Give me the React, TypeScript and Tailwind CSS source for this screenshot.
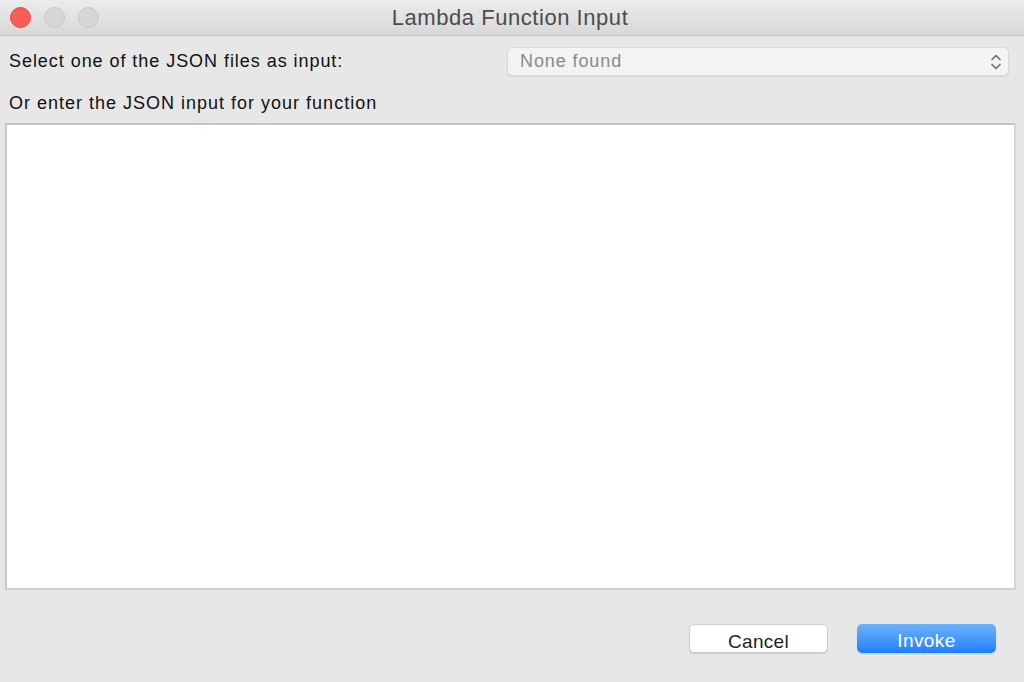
import React from 'react';

// macOS-style dialog: "Lambda Function Input"

const TrafficLights = () => (
  <div className="flex items-center gap-[13px] pl-[10px]">
    <span className="block w-[21px] h-[21px] rounded-full bg-[#fc5b57] border border-[#e2463f]" />
    <span className="block w-[21px] h-[21px] rounded-full bg-[#d6d6d6] border border-[#c6c6c6]" />
    <span className="block w-[21px] h-[21px] rounded-full bg-[#d6d6d6] border border-[#c6c6c6]" />
  </div>
);

const Chevrons = () => (
  <svg width="12" height="18" viewBox="0 0 12 18" fill="none" stroke="#6d6d6d" strokeWidth="1.6" strokeLinecap="round" strokeLinejoin="round">
    <path d="M2 6.5 L6 2.5 L10 6.5" />
    <path d="M2 11.5 L6 15.5 L10 11.5" />
  </svg>
);

export default function App() {
  return (
    <div
      className="w-[1024px] h-[682px] flex flex-col bg-[#e7e7e7] text-[#111] overflow-hidden"
      style={{ fontFamily: '"Liberation Sans", Arial, sans-serif' }}
    >
      {/* title bar */}
      <div className="relative h-[36px] shrink-0 flex items-center bg-gradient-to-b from-[#ececec] to-[#d8d8d8] border-b border-[#c2c2c2]">
        <TrafficLights />
        <div className="absolute inset-0 flex items-center justify-center text-[22px] tracking-[0.55px] text-[#4c4c4c] pr-[4px]">
          Lambda Function Input
        </div>
      </div>

      {/* body */}
      <div className="flex flex-col flex-1 px-[5px]">
        <div className="flex items-center justify-between mt-[11px] h-[29px]">
          <span className="pl-[4px] text-[18px] tracking-[0.95px]">Select one of the JSON files as input:</span>
          <div className="w-[502px] h-[29px] mr-[10px] flex items-center justify-between rounded-[5px] bg-[#f3f3f3] border border-[#d9d9d9] shadow-[0_1px_1px_rgba(0,0,0,0.08)] pl-[12px] pr-[6px]">
            <span className="text-[18px] tracking-[0.9px] text-[#8a8a8a]">None found</span>
            <Chevrons />
          </div>
        </div>

        <div className="mt-[17px] pl-[4px] text-[18px] tracking-[1px] leading-[20px]">
          Or enter the JSON input for your function
        </div>

        <textarea
          className="mt-[10px] h-[467px] w-[1011px] resize-none bg-white border-2 border-t-[#c4c4c4] border-l-[#c8c8c8] border-r-[#d6d6d6] border-b-[#d0d0d0] outline-none"
          defaultValue=""
        />

        <div className="flex justify-end gap-[29px] mt-[34px] pr-[23px]">
          <button className="w-[139px] h-[29px] pt-[3px] rounded-[5px] bg-white border border-[#cfcfcf] shadow-[0_1px_1px_rgba(0,0,0,0.12)] text-[19px] tracking-[0.3px] text-[#1f1f1f]">
            Cancel
          </button>
          <button className="w-[139px] h-[29px] pt-[3px] rounded-[5px] bg-gradient-to-b from-[#6cb3fa] to-[#1b7ffb] text-[19px] tracking-[0.4px] text-white shadow-[0_1px_1px_rgba(0,0,0,0.12)]">
            Invoke
          </button>
        </div>
      </div>
    </div>
  );
}
